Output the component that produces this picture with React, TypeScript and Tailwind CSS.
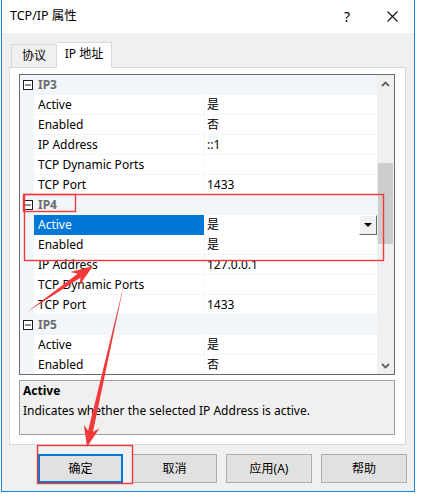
import React from "react";

type Prop = { name: string; value: string; selected?: boolean };
type Group = { title: string; props: Prop[] };

const groups: Group[] = [
  {
    title: "IP3",
    props: [
      { name: "Active", value: "是" },
      { name: "Enabled", value: "否" },
      { name: "IP Address", value: "::1" },
      { name: "TCP Dynamic Ports", value: "" },
      { name: "TCP Port", value: "1433" },
    ],
  },
  {
    title: "IP4",
    props: [
      { name: "Active", value: "是", selected: true },
      { name: "Enabled", value: "是" },
      { name: "IP Address", value: "127.0.0.1" },
      { name: "TCP Dynamic Ports", value: "" },
      { name: "TCP Port", value: "1433" },
    ],
  },
  {
    title: "IP5",
    props: [
      { name: "Active", value: "是" },
      { name: "Enabled", value: "否" },
    ],
  },
];

const MinusBox = () => (
  <svg width="10" height="10" viewBox="0 0 10 10" className="block">
    <rect x="0.5" y="0.5" width="9" height="9" fill="white" stroke="#1e1e1e" />
    <line x1="2" y1="5" x2="8" y2="5" stroke="#1e1e1e" />
  </svg>
);

const Chevron = ({ down }: { down?: boolean }) => (
  <svg width="9" height="6" viewBox="0 0 9 6" className="block">
    <path
      d={down ? "M1 1 L4.5 4.5 L8 1" : "M1 5 L4.5 1.5 L8 5"}
      fill="none"
      stroke="#606060"
      strokeWidth="1.8"
    />
  </svg>
);

function arrowPts(x1: number, y1: number, x2: number, y2: number, head: number, hw: number, sw: number) {
  const dx = x2 - x1;
  const dy = y2 - y1;
  const l = Math.hypot(dx, dy);
  const ux = dx / l;
  const uy = dy / l;
  const px = -uy;
  const py = ux;
  const bx = x2 - ux * head;
  const by = y2 - uy * head;
  const jx = x2 - ux * (head - 5);
  const jy = y2 - uy * (head - 5);
  const pts = [
    [x1, y1],
    [jx + px * sw, jy + py * sw],
    [bx + px * hw, by + py * hw],
    [x2, y2],
    [bx - px * hw, by - py * hw],
    [jx - px * sw, jy - py * sw],
  ];
  return pts.map((p) => p.join(",")).join(" ");
}

const PropRow = ({ p }: { p: Prop }) => (
  <div className="flex h-[20px] shrink-0">
    <div className="w-[14px] bg-[#f2f5fa]" />
    <div
      className={
        p.selected
          ? "w-[171px] bg-[#0078d7] text-white pl-[4px] leading-[20px] border-r border-[#f2f5fa]"
          : "w-[171px] bg-white text-black pl-[4px] leading-[19px] border-b border-r border-[#f2f5fa]"
      }
    >
      {p.name}
    </div>
    <div
      className={
        p.selected
          ? "flex-1 bg-white flex items-center justify-between pl-[2px]"
          : "flex-1 bg-white pl-[2px] leading-[19px] border-b border-[#f2f5fa]"
      }
    >
      <span>{p.value}</span>
      {p.selected && (
        <div className="w-[18px] h-[20px] bg-[#f0f0f0] border border-t-white border-l-white border-r-[#696969] border-b-[#696969] flex items-center justify-center">
          <svg width="8" height="4" viewBox="0 0 8 4" className="block">
            <path d="M0 0 H8 L4 4 Z" fill="#000" />
          </svg>
        </div>
      )}
    </div>
  </div>
);

export default function App() {
  return (
    <div
      className="relative w-[421px] h-[497px] bg-white overflow-hidden text-[12px] text-black"
      style={{ fontFamily: '"Noto Sans", "Noto Sans CJK SC", sans-serif' }}
    >
      <div className="ml-px w-[414px] h-[492px] border-x border-b border-[#1883d7] flex flex-col">
        {/* title bar */}
        <div className="h-[33px] bg-white flex items-center pl-[8px]">
          <span className="text-[12.5px]">TCP/IP 属性</span>
          <span className="ml-auto mr-[37px] text-[14px]">?</span>
          <svg width="11" height="11" viewBox="0 0 11 11" className="mr-[16px]">
            <path d="M0.5 0.5 L10.5 10.5 M10.5 0.5 L0.5 10.5" stroke="#111" strokeWidth="1.1" />
          </svg>
        </div>

        {/* body */}
        <div className="flex-1 bg-[#f0f0f0] pt-[9px] pl-[7px]">
          {/* tabs */}
          <div className="flex items-end h-[25px] pl-[2px]">
            <div className="w-[46px] h-[23px] border border-b-0 border-[#d9d9d9] bg-[#f0f0f0] flex items-center justify-center pb-px">
              协议
            </div>
            <div className="relative z-10 -mb-px w-[55px] h-[26px] border border-b-0 border-l-0 border-[#d9d9d9] bg-white flex items-center justify-center pb-[3px]">
              IP 地址
            </div>
          </div>

          {/* panel */}
          <div className="w-[397px] h-[378px] border border-[#d9d9d9] bg-white pt-[6px] pl-[9px] flex flex-col">
            {/* property grid */}
            <div className="w-[376px] h-[301px] border border-[#6b6b6b] flex">
              <div className="w-[357px] h-[299px] overflow-hidden flex flex-col">
                {groups.map((g) => (
                  <React.Fragment key={g.title}>
                    <div className="flex h-[20px] shrink-0 bg-[#f2f5fa] items-center">
                      <div className="w-[14px] flex justify-center pl-px">
                        <MinusBox />
                      </div>
                      <span className="pl-[4px] font-bold text-[#6d6d6d]">{g.title}</span>
                    </div>
                    {g.props.map((p) => (
                      <PropRow key={g.title + p.name} p={p} />
                    ))}
                  </React.Fragment>
                ))}
              </div>
              {/* scrollbar */}
              <div className="w-[17px] h-[299px] bg-[#f0f0f0] flex flex-col items-center">
                <div className="h-[17px] flex items-center justify-center">
                  <Chevron />
                </div>
                <div className="mt-[71px] w-[15px] h-[81px] bg-[#cdcdcd]" />
                <div className="mt-auto h-[17px] flex items-center justify-center">
                  <Chevron down />
                </div>
              </div>
            </div>

            {/* description */}
            <div className="mt-[5px] w-[376px] h-[55px] border border-[#a0a0a0] bg-[#f0f0f0] pl-[3px]">
              <div className="font-bold leading-[19px]">Active</div>
              <div className="leading-[21px]">Indicates whether the selected IP Address is active.</div>
            </div>
          </div>

          {/* buttons */}
          <div className="flex gap-[9px] pl-[29px] mt-[9px]">
            <button className="w-[85px] h-[29px] bg-[#e1e1e1] border-2 border-[#0078d7]">确定</button>
            <button className="w-[85px] h-[29px] bg-[#e1e1e1] border border-[#adadad]">取消</button>
            <button className="w-[86px] h-[29px] bg-[#e1e1e1] border border-[#adadad]">应用(A)</button>
            <button className="w-[86px] h-[29px] bg-[#e1e1e1] border border-[#adadad]">帮助</button>
          </div>
        </div>
      </div>

      {/* annotations */}
      <svg className="absolute inset-0 pointer-events-none" width="421" height="497" viewBox="0 0 421 497">
        <g fill="none" stroke="#f03a3a" strokeWidth="1.4">
          <rect x="23.5" y="194.5" width="52" height="17" />
          <rect x="24.5" y="194.5" width="359" height="66" />
          <rect x="37.5" y="445.5" width="95" height="38" />
        </g>
        <polygon points={arrowPts(27, 312, 93, 266, 22, 8, 2.5)} fill="#f23a3a" />
        <polygon points={arrowPts(124, 284, 87, 447, 21, 8, 2.5)} fill="#f23a3a" />
      </svg>
    </div>
  );
}
